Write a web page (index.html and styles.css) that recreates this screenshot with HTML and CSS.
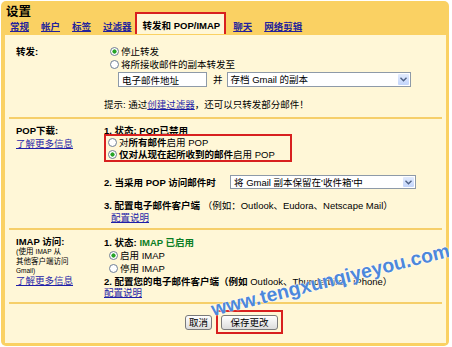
FILE: index.html
```html
<!DOCTYPE html>
<html lang="zh-CN">
<head>
    <meta charset="UTF-8">
    <meta name="viewport" content="width=device-width, initial-scale=1.0">
    <title>设置 - 转发和 POP/IMAP</title>
    <link rel="stylesheet" href="styles.css">
</head>
<body>
    <div class="frame">
        <div class="head">
            <div class="title">设置</div>
            <div class="tabs">
                <a href="#">常规</a>
                <a href="#">帐户</a>
                <a href="#">标签</a>
                <a href="#">过滤器</a>
                <span class="tab-on">转发和 POP/IMAP</span>
                <a href="#">聊天</a>
                <a href="#">网络剪辑</a>
            </div>
        </div>

        <div class="panel">
            <!-- 转发 -->
            <div class="row row-fwd">
                <div class="label"><b>转发:</b></div>
                <div class="body">
                    <label class="opt"><input type="radio" name="fwd" checked>停止转发</label>
                    <label class="opt"><input type="radio" name="fwd">将所接收邮件的副本转发至</label>
                    <div class="fwd-to">
                        <input class="text" value="电子邮件地址">
                        <span class="and">并</span>
                        <div class="select sel-keep">
                            <span>存档 Gmail 的副本</span>
                            <span class="arrow"><svg width="7" height="5" viewBox="0 0 7 5"><path d="M0.5 0.8 L3.5 3.8 L6.5 0.8" fill="none" stroke="#4d6185" stroke-width="1.4"/></svg></span>
                        </div>
                    </div>
                    <p class="hint">提示: 通过<a href="#">创建过滤器</a>，还可以只转发部分邮件！</p>
                </div>
            </div>

            <!-- POP -->
            <div class="row row-pop">
                <div class="label">
                    <b>POP下载:</b>
                    <a href="#">了解更多信息</a>
                </div>
                <div class="body">
                    <div class="step"><b>1. 状态: POP已禁用</b></div>
                    <div class="marked pop-opts">
                        <label class="opt"><input type="radio" name="pop">对<b>所有邮件</b>启用 POP</label>
                        <label class="opt"><input type="radio" name="pop" checked><b>仅对从现在起所收到的邮件</b>启用 POP</label>
                    </div>
                    <div class="when">
                        <b class="when-label">2. 当采用 POP 访问邮件时</b>
                        <div class="select sel-pop">
                            <span>将 Gmail 副本保留在'收件箱'中</span>
                            <span class="arrow"><svg width="7" height="5" viewBox="0 0 7 5"><path d="M0.5 0.8 L3.5 3.8 L6.5 0.8" fill="none" stroke="#4d6185" stroke-width="1.4"/></svg></span>
                        </div>
                    </div>
                    <div class="step step-3"><b>3. 配置电子邮件客户端</b> （例如：Outlook、Eudora、Netscape Mail）</div>
                    <a class="howto" href="#">配置说明</a>
                </div>
            </div>

            <!-- IMAP -->
            <div class="row row-imap">
                <div class="label">
                    <b class="imap-title">IMAP 访问:</b>
                    <span class="small">(使用 <span class="tiny">IMAP</span> 从</span>
                    <span class="small">其他客户端访问</span>
                    <span class="small"><span class="tiny">Gmail)</span></span>
                    <a href="#">了解更多信息</a>
                </div>
                <div class="body">
                    <div class="step"><b>1. 状态: <span class="ok">IMAP 已启用</span></b></div>
                    <label class="opt"><input type="radio" name="imap" checked>启用 IMAP</label>
                    <label class="opt"><input type="radio" name="imap">停用 IMAP</label>
                    <div class="step"><b>2. 配置您的电子邮件客户端（例如</b> Outlook、Thunderbird、iPhone）</div>
                    <a class="howto howto-imap" href="#">配置说明</a>
                </div>
            </div>

            <div class="actions">
                <button class="btn btn-cancel">取消</button>
                <div class="marked save-box">
                    <button class="btn btn-save">保存更改</button>
                </div>
            </div>
        </div>

        <div class="mark">www.tengxunqiyeyou.com</div>
    </div>
</body>
</html>
```

FILE: styles.css
```css
body {
    margin: 0;
    background-color: #ffffff;
    font-family: "Liberation Sans", "Noto Sans CJK SC", sans-serif;
    font-size: 9.5px;
    color: #000000;
}
a {
    color: #1f1fa8;
    text-decoration: underline;
}
.frame {
    position: relative;
    margin: 1px;
    width: 448px;
    height: 345px;
    box-sizing: border-box;
    padding: 0 3px 3px 4px;
    background-color: #fad163;
    border-radius: 5px;
    overflow: hidden;
}
.head {
    height: 34px;
    padding-top: 4px;
    box-sizing: border-box;
}
.title {
    margin-left: 1px;
    font-size: 12.5px;
    font-weight: bold;
    line-height: 15px;
}
.tabs {
    display: flex;
    align-items: flex-end;
    gap: 12px;
    height: 14px;
    padding-left: 5px;
    padding-bottom: 1px;
    line-height: 14px;
}
.tabs a {
    font-weight: bold;
    color: #22229c;
}
.tab-on {
    height: 22px;
    box-sizing: border-box;
    margin: 0 -5px 0 -9px;
    padding: 5px 4px 0 6px;
    border: 2px solid #d8201f;
    border-bottom: none;
    background-color: #fff7d7;
    font-weight: bold;
}
.panel {
    height: 308px;
    background-color: #fff7d7;
    overflow: hidden;
}
.row {
    display: grid;
    grid-template-columns: 88px 1fr;
    margin: 0 4px;
    padding-left: 7px;
    border-bottom: 2px solid #f6cf6a;
}
.label {
    display: flex;
    flex-direction: column;
    line-height: 13px;
}
.body {
    display: flex;
    flex-direction: column;
    align-items: flex-start;
    line-height: 13px;
}
.opt {
    display: flex;
    align-items: center;
    height: 13px;
}
.opt input {
    appearance: none;
    -webkit-appearance: none;
    width: 9px;
    height: 9px;
    margin: 0 2px 0 0;
    box-sizing: border-box;
    border: 1px solid #6f7f95;
    border-radius: 50%;
    background: #ffffff;
}
.opt input:checked {
    background: radial-gradient(circle, #26a326 0 1.8px, #ffffff 2.4px);
}

/* 转发 */
.row-fwd {
    padding-top: 10px;
    padding-bottom: 6px;
}
.row-fwd .opt {
    margin-left: 6px;
}
.fwd-to {
    display: flex;
    align-items: center;
    margin: 1px 0 0 14px;
}
.text {
    width: 89px;
    height: 15px;
    box-sizing: border-box;
    margin: 0;
    padding: 0 3px;
    border: 1px solid #8e9aa8;
    font: inherit;
    background-color: #ffffff;
}
.and {
    margin: 0 4px 0 6px;
}
.select {
    display: flex;
    align-items: center;
    justify-content: space-between;
    box-sizing: border-box;
    padding-left: 3px;
    border: 1px solid #8e9aa8;
    background-color: #ffffff;
}
.sel-keep {
    width: 184px;
    height: 15px;
}
.sel-pop {
    width: 186px;
    height: 14px;
}
.arrow {
    display: flex;
    align-items: center;
    justify-content: center;
    width: 13px;
    height: 100%;
    box-sizing: border-box;
    border: 1px solid #ffffff;
    border-radius: 2px;
    background: linear-gradient(#e2ebfd, #c3d5fb);
}
.hint {
    margin: 11px 0 0;
}

/* POP */
.row-pop {
    padding-top: 5px;
    padding-bottom: 4px;
}
.marked {
    border: 2px solid #d8201f;
}
.pop-opts {
    width: 188px;
    box-sizing: border-box;
    margin-top: -3px;
    padding-left: 2px;
}
.pop-opts .opt {
    height: 12px;
}
.when {
    display: flex;
    align-items: center;
    margin-top: 13px;
}
.when-label {
    width: 126px;
}
.step-3 {
    margin-top: 10px;
}
.howto {
    margin-left: 7px;
    line-height: 12px;
}

/* IMAP */
.row-imap {
    padding-top: 6px;
    padding-bottom: 4px;
}
.imap-title {
    line-height: 11px;
}
.small {
    font-size: 7.5px;
    line-height: 9.5px;
}
.tiny {
    font-size: 6.5px;
}
.row-imap .label a {
    line-height: 10px;
}
.row-imap .opt {
    margin-left: 5px;
}
.ok {
    color: #0a7d24;
}
.howto-imap {
    margin-top: -1px;
    margin-left: 0;
    line-height: 11px;
}

/* 按钮 */
.actions {
    display: flex;
    align-items: center;
    padding: 6px 0 0 180px;
}
.btn {
    height: 15px;
    box-sizing: border-box;
    padding: 0;
    border: 1px solid #7a7a7a;
    border-radius: 3px;
    background: linear-gradient(#ffffff, #dcdcdc);
    font: inherit;
    line-height: 13px;
    color: #000000;
}
.btn-cancel {
    width: 27px;
}
.save-box {
    margin-left: 4px;
    padding: 3px 3px 2px 3px;
}
.btn-save {
    width: 57px;
}

.mark {
    position: absolute;
    left: 212px;
    top: 299px;
    font-family: "Liberation Sans", sans-serif;
    font-size: 19.5px;
    font-weight: bold;
    line-height: 19px;
    white-space: nowrap;
    color: rgba(52, 120, 214, 0.9);
    text-shadow: 0 0 2px #ffffff, 0 0 1px #ffffff;
    transform-origin: 0 16px;
    transform: rotate(-14deg);
}
```
